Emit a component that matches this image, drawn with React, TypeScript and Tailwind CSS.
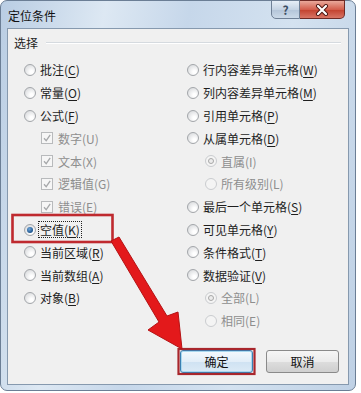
import React from "react";

type Item = {
  t: string;
  k: string;
  kind?: "cb";
  indent?: boolean;
  checked?: boolean;
  disabled?: boolean;
  focus?: boolean;
};

const left: Item[] = [
  { t: "批注", k: "C" },
  { t: "常量", k: "O" },
  { t: "公式", k: "F" },
  { t: "数字", k: "U", kind: "cb", indent: true, checked: true, disabled: true },
  { t: "文本", k: "X", kind: "cb", indent: true, checked: true, disabled: true },
  { t: "逻辑值", k: "G", kind: "cb", indent: true, checked: true, disabled: true },
  { t: "错误", k: "E", kind: "cb", indent: true, checked: true, disabled: true },
  { t: "空值", k: "K", checked: true, focus: true },
  { t: "当前区域", k: "R" },
  { t: "当前数组", k: "A" },
  { t: "对象", k: "B" },
];

const right: Item[] = [
  { t: "行内容差异单元格", k: "W" },
  { t: "列内容差异单元格", k: "M" },
  { t: "引用单元格", k: "P" },
  { t: "从属单元格", k: "D" },
  { t: "直属", k: "I", indent: true, checked: true, disabled: true },
  { t: "所有级别", k: "L", indent: true, disabled: true },
  { t: "最后一个单元格", k: "S" },
  { t: "可见单元格", k: "Y" },
  { t: "条件格式", k: "T" },
  { t: "数据验证", k: "V" },
  { t: "全部", k: "L", indent: true, checked: true, disabled: true },
  { t: "相同", k: "E", indent: true, disabled: true },
];

const Radio = ({ checked, disabled }: { checked?: boolean; disabled?: boolean }) => (
  <span
    className={`w-[12px] h-[12px] rounded-full border shrink-0 flex items-center justify-center ${
      disabled
        ? "border-[#cacccf] bg-[#f4f4f4]"
        : "border-[#a3a6aa] bg-[radial-gradient(circle_at_65%_70%,#ffffff_15%,#d3d5d8_95%)]"
    }`}
  >
    {checked && (
      <span
        className={`w-[6px] h-[6px] rounded-full ${
          disabled
            ? "bg-[#ececec] border border-[#a8a8a8]"
            : "bg-[radial-gradient(circle_at_40%_35%,#6fa6da_0%,#1d548c_70%)]"
        }`}
      />
    )}
  </span>
);

const Check = () => (
  <span className="w-[12px] h-[12px] border border-[#b8babc] bg-[#f6f6f6] shrink-0 flex items-center justify-center">
    <svg width="10" height="10" viewBox="0 0 10 10">
      <path d="M2 5.2 L4.2 7.6 L8.2 1.8" fill="none" stroke="#a6a8aa" strokeWidth="1.3" />
    </svg>
  </span>
);

const Row = ({ it, indentCls }: { it: Item; indentCls: string }) => (
  <div className={`h-[22.8px] flex items-center ${it.indent ? indentCls : ""}`}>
    {it.kind === "cb" ? <Check /> : <Radio checked={it.checked} disabled={it.disabled} />}
    <span
      className={`leading-[15px] whitespace-nowrap ${
        it.kind === "cb" ? "ml-[5px]" : it.focus ? "ml-[2px] px-[1px] border border-dotted border-[#222]" : "ml-[4px]"
      } ${it.disabled ? "text-[#8e8e8e]" : "text-[#1e1e1e]"}`}
    >
      {it.t}(
      {it.disabled ? it.k : <u className="underline-offset-[2px]">{it.k}</u>})
    </span>
  </div>
);

export default function App() {
  return (
    <div className="w-[361px] h-[393px] bg-white relative overflow-hidden font-['Noto_Sans_CJK_SC','Noto_Sans',sans-serif] text-[12px]">
      <div className="w-[356px] h-[391px] rounded-[7px] border border-[#6b7e95] bg-[linear-gradient(100deg,#b9cde3_0%,#dde8f3_25%,#c6d7ea_45%,#d4e2f0_70%,#bfd1e5_100%)] flex flex-col pl-[6px] pr-[6px] pb-[5px]">
        {/* title bar */}
        <div className="h-[27px] flex items-start justify-between shrink-0">
          <div className="pt-[6px] pl-[1px] text-[12px] text-[#111]">定位条件</div>
          <div className="flex mr-[4px] -mt-px">
            <div className="w-[29px] h-[19px] border border-[#6f8096] rounded-bl-[5px] bg-[linear-gradient(#e6eef7,#c5d3e3_50%,#b3c4d8_51%,#cbd9e8)] flex items-center justify-center text-[#3d4e64] text-[12px] font-bold leading-none">
              ?
            </div>
            <div className="w-[45px] h-[19px] border border-l-0 border-[#6e2a25] rounded-br-[5px] bg-[linear-gradient(#e9a99b,#d35e4c_50%,#c2402d_51%,#d87565)] flex items-center justify-center">
              <svg width="14" height="12" viewBox="0 0 14 12">
                <path d="M3 2 L11 10 M11 2 L3 10" stroke="#4b1510" strokeWidth="4" strokeLinecap="round" />
                <path d="M3 2 L11 10 M11 2 L3 10" stroke="#fff" strokeWidth="2.2" strokeLinecap="round" />
              </svg>
            </div>
          </div>
        </div>

        {/* client area */}
        <div className="flex-1 bg-[#f0f0f0] border border-[#8699ae] flex flex-col">
          <div className="h-[16px] mt-[6px] flex items-center pl-[6px] pr-[7px]">
            <span className="text-[#1e1e1e] leading-none">选择</span>
            <span className="flex-1 ml-[8px] h-[2px] border-t border-[#d5dadf] border-b border-b-white" />
          </div>

          <div className="grid grid-cols-[163px_1fr] pl-[16px] mt-[7.6px]">
            <div className="flex flex-col">
              {left.map((it) => (
                <Row key={it.t} it={it} indentCls="pl-[17px]" />
              ))}
            </div>
            <div className="flex flex-col">
              {right.map((it) => (
                <Row key={it.t} it={it} indentCls="pl-[18px]" />
              ))}
            </div>
          </div>

          <div className="mt-auto mb-[11px] pr-[9px] flex justify-end gap-[13px]">
            <button className="w-[73px] h-[23px] rounded-[3px] border border-[#3c7fb1] bg-[linear-gradient(#f4f9fd,#e3eef8_50%,#cfe2f2_51%,#dceaf6)] shadow-[inset_0_0_0_1px_#a8d8f0] text-[#111] text-[12px]">
              确定
            </button>
            <button className="w-[73px] h-[23px] rounded-[3px] border border-[#8a8a8a] bg-[linear-gradient(#f6f6f6,#ebebeb_50%,#dddddd_51%,#cfcfcf)] text-[#111] text-[12px]">
              取消
            </button>
          </div>
        </div>
      </div>

      {/* annotations */}
      <svg className="absolute inset-0 pointer-events-none" width="361" height="393" viewBox="0 0 361 393">
        <rect x="12.5" y="215" width="100" height="27" fill="none" stroke="#bf2a2f" strokeWidth="2.6" />
        <rect x="178.5" y="349" width="76" height="25" fill="none" stroke="#a8262c" strokeWidth="2.2" />
        <polygon
          points="111,241 119,237 167,316 178,312 182,349 148,330 159,322"
          fill="#e3191b"
          stroke="#b51214"
          strokeWidth="1"
          strokeLinejoin="round"
        />
      </svg>
    </div>
  );
}
